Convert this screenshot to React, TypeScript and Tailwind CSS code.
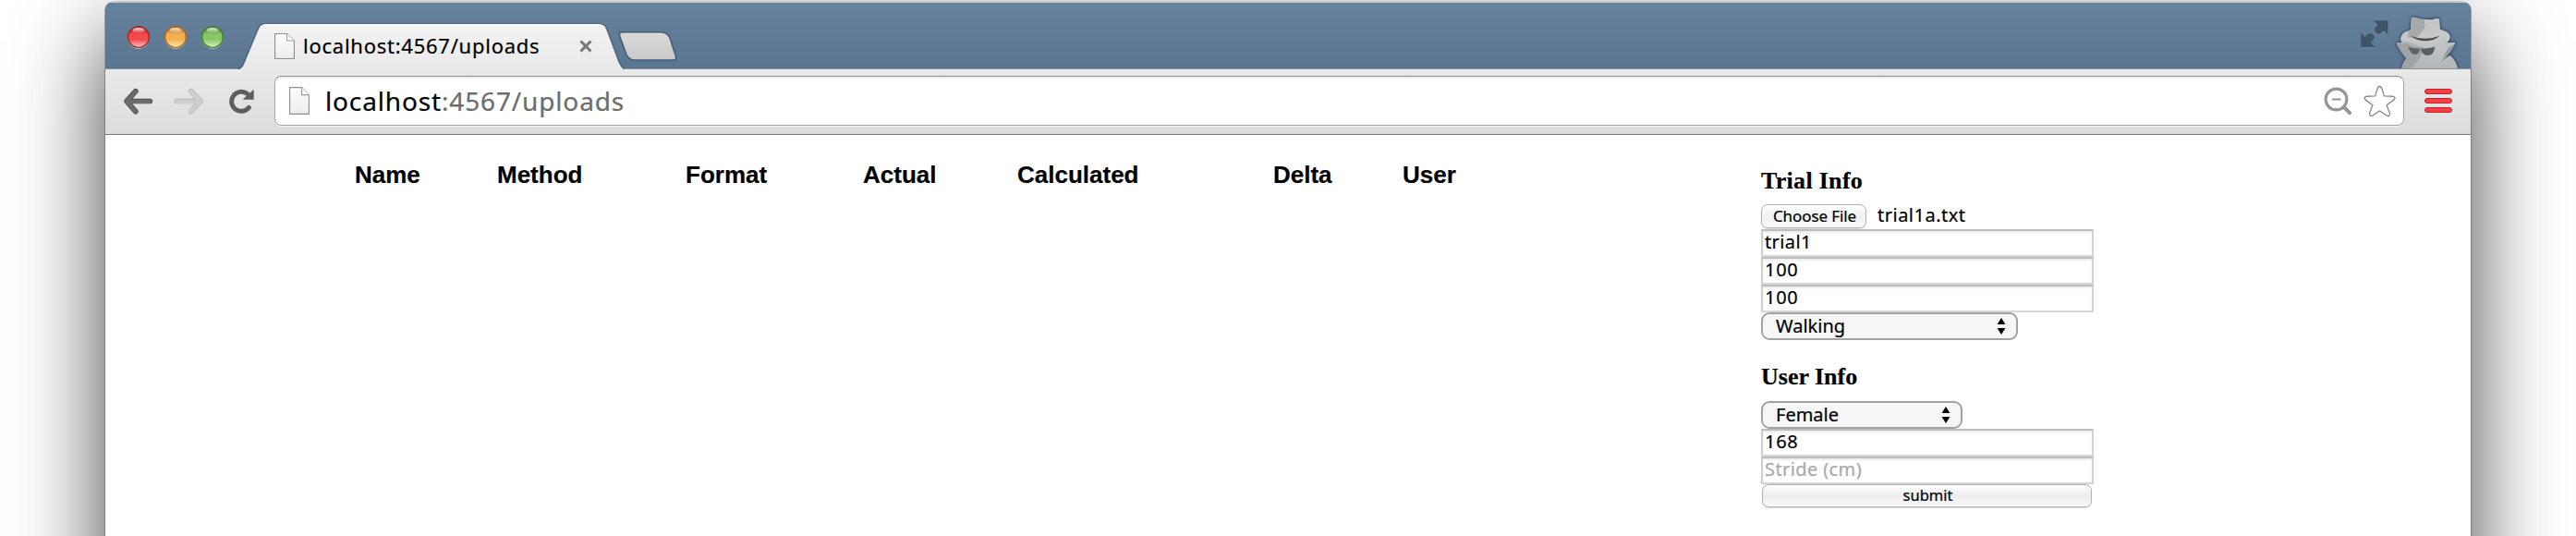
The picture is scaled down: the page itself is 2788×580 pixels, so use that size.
import React from "react";

const sans = "font-['Noto_Sans','Open_Sans',sans-serif]";

function PageIcon({ className }: { className: string }) {
  return (
    <svg viewBox="0 0 22 30" preserveAspectRatio="none" className={className}>
      <defs>
        <linearGradient id="page" x1="0" y1="0" x2="0" y2="1">
          <stop offset="0" stopColor="#fdfdfd" />
          <stop offset="1" stopColor="#ececec" />
        </linearGradient>
      </defs>
      <path d="M.6 .6H13.6L21.4 8.6V29.4H.6Z" fill="url(#page)" stroke="#8e8e8e" strokeWidth="1.1" />
      <path d="M13.6 .6V8.6H21.4" fill="#fff" stroke="#9a9a9a" strokeWidth="1.1" />
    </svg>
  );
}

function Light({ id, edge, mid, glow }: { id: string; edge: string; mid: string; glow: string }) {
  return (
    <svg viewBox="0 0 28 28" className="h-7 w-7">
      <defs>
        <linearGradient id={id} x1="0" y1="0" x2="0" y2="1">
          <stop offset="0" stopColor={edge} />
          <stop offset=".38" stopColor={mid} />
          <stop offset=".62" stopColor={mid} />
          <stop offset="1" stopColor={glow} />
        </linearGradient>
        <linearGradient id={id + "s"} x1="0" y1="0" x2="0" y2="1">
          <stop offset="0" stopColor="#fff" stopOpacity=".85" />
          <stop offset="1" stopColor="#fff" stopOpacity=".05" />
        </linearGradient>
      </defs>
      <circle cx="14" cy="15.2" r="11.7" fill="#b9cbdc" opacity=".8" />
      <circle cx="14" cy="14" r="11.4" fill={`url(#${id})`} stroke={edge} strokeWidth="1.4" />
      <ellipse cx="14" cy="6.8" rx="6.4" ry="2.9" fill={`url(#${id}s)`} />
    </svg>
  );
}

function ExpandIcon() {
  return (
    <svg viewBox="46 67 90 90" className="h-[30px] w-[30px]">
      <g fill="#a9bccd" opacity=".4" transform="translate(0 3)">
        <path d="M90 69H133V112L121 100L110 109Q100 113 94 105Q89 97 95 91L102 82Z" />
        <path d="M48 153V110L60 122L71 112Q81 108 87 116Q92 124 86 130L78 140L91 153Z" />
      </g>
      <g fill="#415569" stroke="#33475b" strokeWidth="1.5">
        <path d="M90 69H133V112L121 100L110 109Q100 113 94 105Q89 97 95 91L102 82Z" />
        <path d="M48 153V110L60 122L71 112Q81 108 87 116Q92 124 86 130L78 140L91 153Z" />
      </g>
    </svg>
  );
}

function Incognito() {
  return (
    <svg viewBox="154 45 216 177" className="h-[59px] w-[72px]">
      <defs>
        <filter id="soft" x="-20%" y="-20%" width="140%" height="140%">
          <feGaussianBlur stdDeviation="4" />
        </filter>
        <linearGradient id="spy" x1="0" y1="0" x2="0" y2="1">
          <stop offset="0" stopColor="#c2c4c6" />
          <stop offset=".45" stopColor="#c6c8ca" />
          <stop offset="1" stopColor="#b2b6ba" />
        </linearGradient>
        <clipPath id="body">
          <path d="M210 60Q215 53 225 57Q240 64 258 63Q275 65 290 60Q301 58 302 66L304 95Q335 104 336 117Q337 129 326 138L354 138Q343 168 310 200Q322 186 336 180Q356 196 361 222H178Q181 205 194 190Q176 168 161 140L180 138Q172 126 178 116Q184 103 208 97Z" />
        </clipPath>
      </defs>
      <path d="M210 60Q215 53 225 57Q240 64 258 63Q275 65 290 60Q301 58 302 66L304 95Q335 104 336 117Q337 129 326 138L354 138Q343 168 310 200L336 180Q356 196 361 222H178Q181 205 194 190Q176 168 161 140L180 138Q172 126 178 116Q184 103 208 97Z" fill="#253a52" stroke="#253a52" strokeWidth="4" filter="url(#soft)" />
      <g clipPath="url(#body)">
        <rect x="154" y="45" width="216" height="177" fill="url(#spy)" />
        <path d="M200 45H240Q256 62 254 84Q250 104 226 122H200Z" fill="#a6a9ac" />
        <path d="M154 134Q200 131 238 152H250Q242 195 208 222H154Z" fill="#a0a4a7" />
        <path d="M176 131Q205 133 225 148Q255 156 290 150Q315 144 330 134L340 142H318Q300 151 262 154Q215 154 196 140H170Z" fill="#b4b6b8" />
      </g>
      <path d="M208 116Q255 135 302 116Q285 133 255 133Q226 132 208 116Z" fill="#4b4e51" />
      <path d="M201 152Q220 159 238 157Q236 176 222 177Q206 175 201 152Z" fill="#606468" />
      <path d="M240 158Q264 158 287 152Q284 180 263 180Q245 178 240 158Z" fill="#5a5e62" />
      <path d="M354 140Q343 170 310 201Q320 170 333 153Z" fill="#4a5561" opacity=".35" />
    </svg>
  );
}

function NavIcons() {
  return (
    <>
      <svg viewBox="70 282 98 92" className="ml-[19px] h-[31px] w-[33px]">
        <path d="M111 296L82 328L111 361M86 328H157" fill="none" stroke="#4d4d4d" strokeWidth="17" strokeLinecap="round" strokeLinejoin="round" />
        <path d="M111 297L82 329L111 361M86 329H157" fill="none" stroke="#6b6b6b" strokeWidth="13" strokeLinecap="round" strokeLinejoin="round" />
      </svg>
      <svg viewBox="235 282 98 92" className="ml-[22px] h-[31px] w-[33px]">
        <path d="M291 296L321 328L291 361M245 328H317" fill="none" stroke="#b6b6b6" strokeWidth="17" strokeLinecap="round" strokeLinejoin="round" />
        <path d="M291 297L321 329L291 361M245 329H317" fill="none" stroke="#cecece" strokeWidth="13" strokeLinecap="round" strokeLinejoin="round" />
      </svg>
      <svg viewBox="411 282 88 92" className="ml-[26px] h-[31px] w-[29px]">
        <path d="M479 349A32 32 0 1 1 473 303" fill="none" stroke="#5e5e5e" strokeWidth="15" strokeLinecap="round" />
        <path d="M495 289V323H458Z" fill="#5e5e5e" />
      </svg>
    </>
  );
}

function Field({ value, muted = false, spacing }: { value: string; muted?: boolean; spacing: string }) {
  return (
    <div className="flex h-[30px] w-[360px] items-center border-2 border-t-[#bdbdbd] border-r-[#d2d2d2] border-b-[#d6d6d6] border-l-[#cfcfcf] bg-white pb-[2px] pl-[2px] shadow-[inset_0_2px_2px_#ededed]">
      <span className={`whitespace-pre text-[20px] leading-[24px] ${spacing} ${muted ? "text-[#a9a9a9]" : "text-black"}`}>{value}</span>
    </div>
  );
}

function Select({ value, width }: { value: string; width: string }) {
  return (
    <div className={`flex h-[30px] items-center justify-between rounded-[9px] border-2 border-[#a2a2a2] bg-[#f6f6f6] pr-[11px] pb-px pl-[14px] ${width}`}>
      <span className="text-[20px] leading-[24px] text-black">{value}</span>
      <svg viewBox="0 0 10 18" className="mt-px h-[18px] w-[10px]">
        <path d="M5 0L9.4 7H.6ZM5 18L9.4 11H.6Z" fill="#000" />
      </svg>
    </div>
  );
}

const columns = [
  { label: "Name", width: "w-[154px]" },
  { label: "Method", width: "w-[204px]" },
  { label: "Format", width: "w-[192px]" },
  { label: "Actual", width: "w-[167px]" },
  { label: "Calculated", width: "w-[277px]" },
  { label: "Delta", width: "w-[140px]" },
  { label: "User", width: "w-[388px]" },
];

export default function App() {
  return (
    <div className="h-[580px] w-[2788px] overflow-hidden bg-white pt-px pl-[113px]">
      <div className="h-[900px] w-[2562px] rounded-t-[11px] shadow-[0_40px_96px_rgba(0,0,0,0.74)]">
        <div className={`h-full overflow-hidden rounded-t-[11px] bg-white [-webkit-text-stroke:0.2px] ${sans}`}>
          <div className="flex h-[74px] border-x border-t-2 border-x-[#8f9aa5] border-t-[#c3c7ca] bg-linear-to-b from-[#67829d] to-[#5a7590] shadow-[inset_0_-1px_0_#8c9298]">
            <div className="flex gap-3 pt-[23px] pl-[22px]">
              <Light id="red" edge="#a3262a" mid="#f4494b" glow="#fbc9c6" />
              <Light id="amber" edge="#a9661c" mid="#f3ae50" glow="#fdf3b0" />
              <Light id="green" edge="#427c2c" mid="#85c765" glow="#dcf5c4" />
            </div>
            <div className="relative ml-[12px] h-[72px] w-[420px]">
              <svg viewBox="256 3 420 72" className="absolute inset-0 h-[72px] w-[420px]">
                <defs>
                  <linearGradient id="tab" x1="0" y1="0" x2="0" y2="1">
                    <stop offset="0" stopColor="#f3f3f3" />
                    <stop offset="1" stopColor="#e9e9e9" />
                  </linearGradient>
                </defs>
                <path d="M256 76Q262 74 264 68L279 32Q281.500 25.500 288 25.500H648Q654 25.500 657 32L670 67Q673 74 678 76Z" fill="url(#tab)" stroke="#3c5269" strokeOpacity=".75" strokeWidth="1.6" />
                <path d="M282 29Q284 26.800 288 26.800H648Q652 26.800 655 30" fill="none" stroke="#fff" strokeWidth="1.2" />
              </svg>
              <div className="relative flex h-[47px] translate-y-[23px] items-center pl-[41px]">
                <PageIcon className="h-[28px] w-[22px]" />
                <span className="-mt-[2px] ml-[9px] text-[22px] leading-[30px] tracking-[0.75px] text-black">localhost:4567/uploads</span>
                <svg viewBox="0 0 14 14" className="ml-[43px] h-[14px] w-[14px]">
                  <path d="M1.500 1.500L12.500 12.500M12.500 1.500L1.500 12.500" stroke="#777" strokeWidth="3" />
                </svg>
              </div>
            </div>
            <svg viewBox="668 32 66 36" className="-ml-[7px] mt-[29px] h-[36px] w-[66px]">
              <defs>
                <linearGradient id="plus" x1="0" y1="0" x2="0" y2="1">
                  <stop offset="0" stopColor="#dadada" />
                  <stop offset="1" stopColor="#c9c9c9" />
                </linearGradient>
              </defs>
              <path d="M672 34.800H714Q721 34.800 724 41L730.500 61Q731.500 65 728 65H686Q680 65 677 59L669.500 38.500Q669 34.800 672 34.800Z" fill="url(#plus)" stroke="#435971" strokeWidth="1.500" />
            </svg>
            <div className="mr-[11px] ml-auto flex items-end gap-[6px] pb-px">
              <div className="mb-[22px]"><ExpandIcon /></div>
              <Incognito />
            </div>
          </div>
          <div className="flex h-[71px] items-center border-x border-x-[#808080] border-b border-b-[#777] bg-linear-to-b from-[#e9e9e9] to-[#dcdcdc] pb-[2px]">
            <NavIcons />
            <div className="ml-[21px] flex h-[54px] w-[2305px] items-center rounded-[7px] border-[1.5px] border-[#a4a4a4] border-t-[#8c8c8c] bg-white pl-[15px] shadow-[inset_0_2px_1px_#efefef,0_1px_0_#f4f4f4]">
              <PageIcon className="h-[30px] w-[22px]" />
              <span className="-mt-px ml-[17px] text-[28px] leading-[36px] tracking-[0.85px] text-[#6c6c6c]">
                <span className="text-black">localhost</span>:4567/uploads
              </span>
              <svg viewBox="346 280 94 94" className="mr-[11px] ml-auto h-[31px] w-[31px]">
                <circle cx="387" cy="321" r="34.500" fill="none" stroke="#959595" strokeWidth="9.500" />
                <path d="M373 321H402" stroke="#959595" strokeWidth="6" />
                <path d="M413 347L431 365" stroke="#959595" strokeWidth="12" strokeLinecap="round" />
              </svg>
              <svg viewBox="52 272 110 106" className="mr-[7px] h-[35px] w-[37px]">
                <path d="M92 308L100 283Q107 270 114 283L122 308L149 309Q162 312 154 320L130 338L140 364Q141 377 130 372L107 357L84 372Q73 377 74 364L84 338L60 320Q52 312 65 309Z" fill="#fff" stroke="#858585" strokeWidth="4" strokeLinejoin="round" />
              </svg>
            </div>
            <div className="ml-[22px] flex flex-col gap-[4px]">
              <div className="h-[6px] w-[30px] rounded-[3px] border border-[#cc1f25] bg-[#ee4247]" />
              <div className="h-[6px] w-[30px] rounded-[3px] border border-[#cc1f25] bg-[#ee4247]" />
              <div className="h-[6px] w-[30px] rounded-[3px] border border-[#cc1f25] bg-[#ee4247]" />
            </div>
          </div>
          <div className="flex h-[760px] border-x border-[#808080] pl-[270px]">
            <div className="flex pt-[28px] font-['Liberation_Sans',Arial,sans-serif] text-[26px] leading-[30px] font-bold text-black">
              {columns.map((c) => (
                <div key={c.label} className={c.width}>{c.label}</div>
              ))}
            </div>
            <div className="flex w-[360px] flex-col pt-[34px]">
              <h3 className="translate-y-px font-['Liberation_Serif','Times_New_Roman',serif] text-[26px] leading-[30px] font-bold tracking-[0.3px] text-black">Trial Info</h3>
              <div className="mt-[11px] flex h-[27px] items-start">
                <div className="flex h-[26px] w-[114px] items-center justify-center rounded-[7px] border-[1.5px] border-[#b0b0b0] bg-linear-to-b from-white via-[#f0f0f0] to-[#fafafa] pl-[2px] text-[17px] leading-[20px] tracking-[-0.1px] text-black shadow-[0_1px_1px_#dcdcdc]">Choose File</div>
                <span className="ml-[12px] text-[20px] leading-[24px] tracking-[0.5px] text-black">trial1a.txt</span>
              </div>
              <Field value="trial1" spacing="tracking-[0.4px]" />
              <Field value="100" spacing="tracking-[0.7px]" />
              <Field value="100" spacing="tracking-[0.7px]" />
              <Select value="Walking" width="w-[278px]" />
              <h3 className="mt-[24px] translate-y-px font-['Liberation_Serif','Times_New_Roman',serif] text-[26px] leading-[30px] font-bold text-black">User Info</h3>
              <div className="mt-[12px]"><Select value="Female" width="w-[218px]" /></div>
              <Field value="168" spacing="tracking-[0.7px]" />
              <Field value="Stride (cm)" muted spacing="tracking-[0.4px]" />
              <div className="ml-px flex h-[25px] w-[357px] items-center justify-center rounded-[7px] border-[1.5px] border-[#b0b0b0] bg-linear-to-b from-white via-[#ececec] to-[#fafafa] pb-px pl-[2px] text-[16.500px] leading-[20px] text-black shadow-[0_1px_1px_#dcdcdc]">submit</div>
            </div>
          </div>
        </div>
      </div>
    </div>
  );
}
